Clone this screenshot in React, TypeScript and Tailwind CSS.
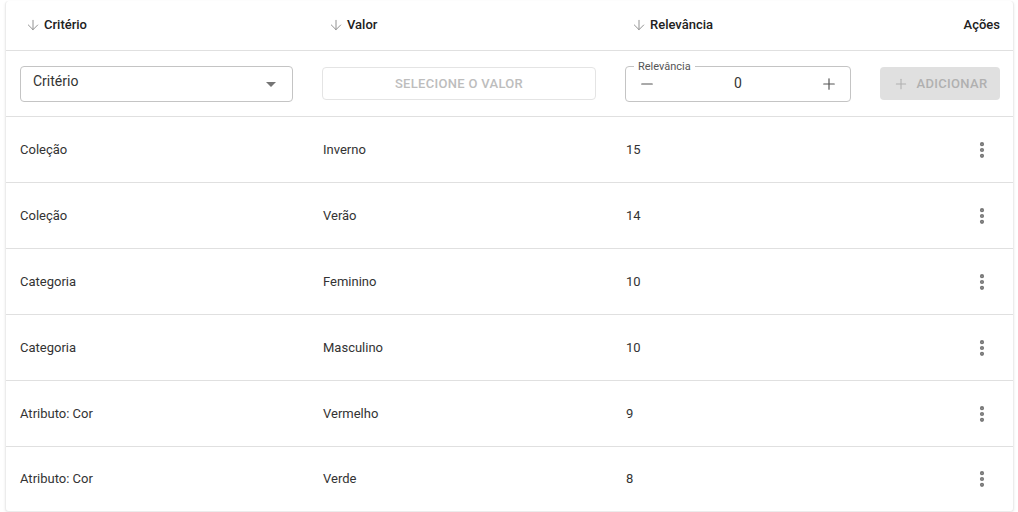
import { ArrowDown, Minus, Plus, EllipsisVertical } from 'lucide-react'

// Ranking rules table: sortable headers, an inline "add" row, then the rules.
const ROWS = [
  { criterio: 'Coleção', valor: 'Inverno', relevancia: 15 },
  { criterio: 'Coleção', valor: 'Verão', relevancia: 14 },
  { criterio: 'Categoria', valor: 'Feminino', relevancia: 10 },
  { criterio: 'Categoria', valor: 'Masculino', relevancia: 10 },
  { criterio: 'Atributo: Cor', valor: 'Vermelho', relevancia: 9 },
  { criterio: 'Atributo: Cor', valor: 'Verde', relevancia: 8 },
]

const GRID = 'grid grid-cols-[273px_273px_225px_119px] gap-x-[30px] items-center'

function SortHeader({ label }: { label: string }) {
  return (
    <div className="flex items-center gap-[3px] pl-[5px] text-[13px] font-medium text-[#212121]">
      <ArrowDown size={16} strokeWidth={1.4} className="text-[#8a8a8a]" />
      <span>{label}</span>
    </div>
  )
}

export default function App() {
  return (
    <div className="min-h-[512px] bg-white pt-px font-['Roboto','Liberation_Sans',sans-serif]">
      <div className="ml-[5px] w-[1009px] rounded-[4px] border-x border-b border-[#ececec] bg-white
                      shadow-[0_1px_3px_rgba(0,0,0,0.08)]">
        {/* header */}
        <div className={`${GRID} h-[50px] border-b border-[#e0e0e0] pb-[2px] pl-[14px] pr-[15px]`}>
          <SortHeader label="Critério" />
          <SortHeader label="Valor" />
          <SortHeader label="Relevância" />
          <div className="text-right text-[13px] font-medium text-[#212121]">Ações</div>
        </div>

        {/* add row */}
        <div className={`${GRID} h-[66px] border-b border-[#e0e0e0] pl-[14px] pr-[15px]`}>
          <div className="flex h-[36px] items-center justify-between rounded-[4px] border border-[#c4c4c4] pl-[12px] pr-[16px]">
            <span className="-mt-[5px] text-[14px] text-[#333]">Critério</span>
            <span className="mt-[2px] h-0 w-0 border-x-[5px] border-t-[5px] border-x-transparent border-t-[#757575]" />
          </div>
          <button
            type="button"
            disabled
            className="-ml-px h-[33px] rounded-[4px] border border-[#e4e4e4] text-[13px] font-medium tracking-[0.3px] text-[#bdbdbd]"
          >
            SELECIONE O VALOR
          </button>
          <div className="relative -ml-px flex h-[36px] items-center justify-between rounded-[4px] border border-[#c4c4c4] px-[12px]">
            <span className="absolute -top-[6px] left-[8px] bg-white px-[4px] text-[11px] leading-[12px] text-[#555]">
              Relevância
            </span>
            <Minus size={18} strokeWidth={1.6} className="text-[#555]" />
            <span className="text-[14px] text-[#333]">0</span>
            <Plus size={18} strokeWidth={1.6} className="text-[#555]" />
          </div>
          <button
            type="button"
            disabled
            className="-ml-px flex h-[33px] items-center justify-center gap-[8px] rounded-[4px] bg-[#e0e0e0] text-[13px] font-medium tracking-[0.3px] text-[#b0b0b0]"
          >
            <Plus size={16} strokeWidth={1.6} />
            ADICIONAR
          </button>
        </div>

        {/* rows */}
        {ROWS.map((r, i) => {
          const last = i === ROWS.length - 1
          return (
            <div
              key={i}
              className={`${GRID} pl-[14px] pr-[15px] text-[13px] text-[#333] ${last ? 'h-[64px]' : 'h-[66px] border-b border-[#e0e0e0]'}`}
            >
              <span>{r.criterio}</span>
              <span>{r.valor}</span>
              <span>{r.relevancia}</span>
              <div className="flex justify-end pr-[8px]">
                <EllipsisVertical size={20} strokeWidth={3} className="text-[#757575]" />
              </div>
            </div>
          )
        })}
      </div>
    </div>
  )
}
